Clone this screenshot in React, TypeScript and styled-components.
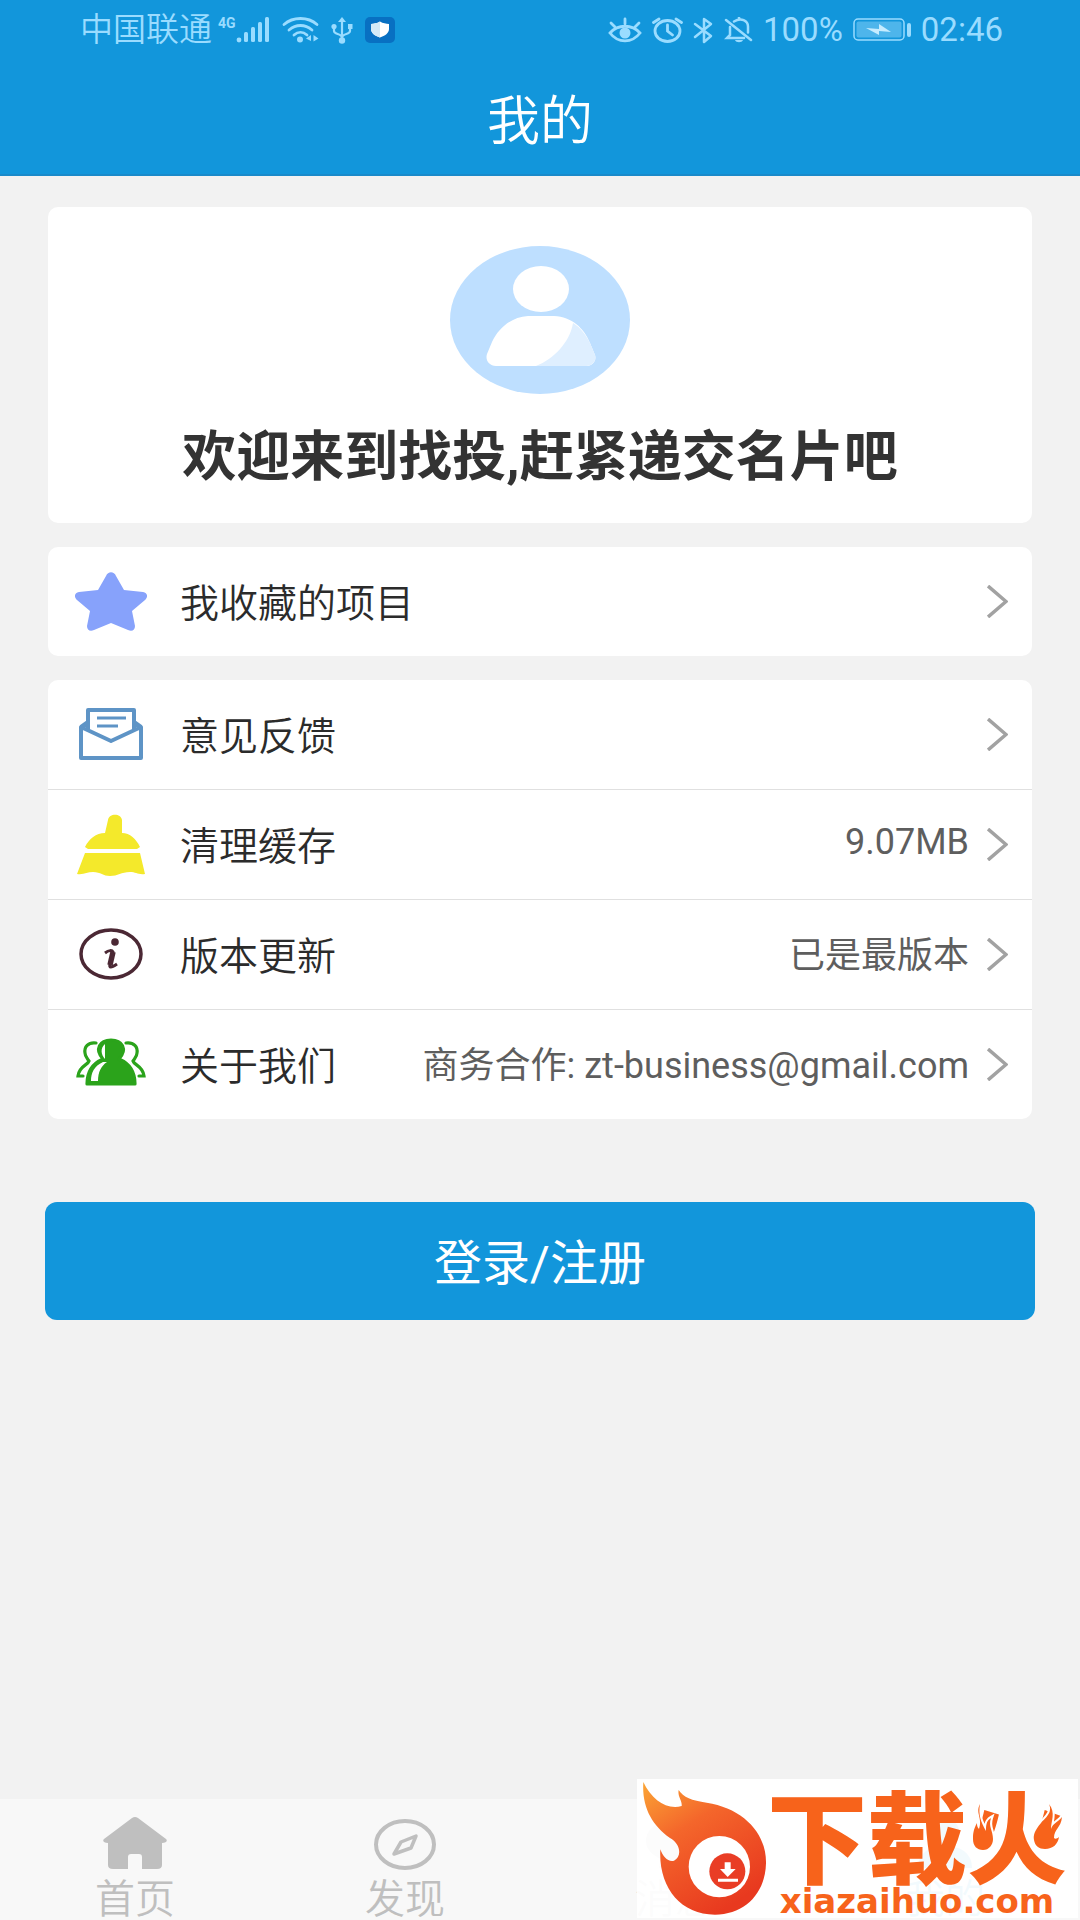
import React from "react";
import styled, { createGlobalStyle } from "styled-components";

const BLUE = "#1296db";
const STATUS = "#9adcff";
const ORANGE = "#f7631b";

const GlobalStyle = createGlobalStyle`
  *, *::before, *::after { box-sizing: border-box; }
  body {
    margin: 0;
    background: #f2f2f2;
    font-family: Roboto, "Noto Sans CJK SC", sans-serif;
  }
  button { font: inherit; border: 0; padding: 0; background: none; cursor: pointer; }
  a { color: inherit; text-decoration: none; }
  h1, h2, p, ul { margin: 0; padding: 0; font-weight: inherit; }
  ul { list-style: none; }
  svg { display: block; flex: none; }
`;

const Screen = styled.div`
  min-height: 100vh;
  display: flex;
  flex-direction: column;
`;

const TopBar = styled.header`
  background: ${BLUE};
  border-bottom: 2px solid #1a8aca;
`;

const StatusBar = styled.div`
  display: flex;
  align-items: center;
  justify-content: space-between;
  height: 60px;
  padding: 0 77px 0 80px;
  color: ${STATUS};
  font-size: 33px;
  line-height: 40px;
`;

const StatusGroup = styled.div<{ $gap: number }>`
  display: flex;
  align-items: center;
  gap: ${(p) => p.$gap}px;
`;

const Signal = styled.div`
  display: flex;
  align-items: center;
`;

const Carrier = styled.span`
  margin-right: 6px;
  font-weight: 350;
`;

const Network = styled.span`
  align-self: flex-start;
  padding-top: 6px;
  font-size: 14px;
  font-weight: 700;
  line-height: 14px;
`;

const Title = styled.h1`
  display: flex;
  align-items: center;
  justify-content: center;
  height: 114px;
  color: #fff;
  font-size: 53px;
  font-weight: 350;
`;

const Content = styled.main`
  flex: 1;
  padding: 31px 45px 40px;
`;

const Cards = styled.div`
  display: flex;
  flex-direction: column;
  gap: 24px;
  padding: 0 3px;
`;

const Card = styled.section`
  overflow: hidden;
  border-radius: 10px;
  background: #fff;
`;

const Welcome = styled(Card)`
  display: flex;
  flex-direction: column;
  align-items: center;
  gap: 30px;
  padding: 39px 20px 31px;
`;

const Greeting = styled.h2`
  color: #333;
  font-size: 54px;
  font-weight: 700;
  line-height: 68px;
`;

const Item = styled.li`
  & + & { border-top: 1px solid #e0e0e0; }
`;

const Row = styled.button`
  display: flex;
  align-items: center;
  width: 100%;
  height: 109px;
  padding: 0 24px 0 27px;
  text-align: left;
`;

const Label = styled.span`
  flex: 1;
  margin-left: 33px;
  padding-bottom: 3px;
  color: #2b2b2b;
  font-size: 39px;
  font-weight: 350;
  white-space: nowrap;
`;

const Value = styled.span`
  margin-right: 18px;
  padding-bottom: 5px;
  color: #5e5e5e;
  font-size: 36px;
  white-space: nowrap;
`;

const Login = styled.button`
  display: block;
  width: 100%;
  height: 118px;
  margin-top: 83px;
  padding-bottom: 4px;
  border-radius: 12px;
  background: ${BLUE};
  color: #fff;
  font-size: 48px;
`;

const TabBar = styled.nav`
  position: relative;
  display: grid;
  grid-template-columns: repeat(4, 1fr);
  background: #f8f8f8;
`;

const Tab = styled.a<{ $active?: boolean }>`
  display: flex;
  flex-direction: column;
  align-items: center;
  gap: 10px;
  height: 121px;
  padding-top: 17px;
  color: ${(p) => (p.$active ? BLUE : "#bfbfbf")};
  font-size: 40px;
  font-weight: 350;
  line-height: 40px;
`;

const Watermark = styled.div`
  position: absolute;
  right: 2px;
  bottom: 2px;
  display: flex;
  width: 441px;
  height: 139px;
  background: rgba(255, 255, 255, 0.95);
  color: ${ORANGE};
  white-space: nowrap;
`;

const Brand = styled.div`
  display: flex;
  flex-direction: column;
  align-items: center;
  padding-top: 14px;
`;

const BrandName = styled.div`
  position: relative;
  font-size: 100px;
  font-weight: 900;
  line-height: 98px;
`;

const Sparks = styled.svg`
  position: absolute;
  top: 10px;
  right: 2px;
`;

const BrandSite = styled.div`
  font-family: "DejaVu Sans", sans-serif;
  font-size: 34px;
  font-weight: 700;
  line-height: 20px;
`;

const SignalIcon = () => (
  <svg width="34" height="26" viewBox="0 0 34 26" fill="currentColor">
    <circle cx="3" cy="23" r="2.4" />
    <rect x="8" y="15" width="4" height="10" rx="1.5" />
    <rect x="15" y="10" width="4" height="15" rx="1.5" />
    <rect x="22" y="5" width="4" height="20" rx="1.5" />
    <rect x="29" y="0" width="4" height="25" rx="1.5" />
  </svg>
);

const WifiIcon = () => (
  <svg width="37" height="26" viewBox="0 0 37 26" fill="none" stroke="currentColor" strokeWidth="2.8" strokeLinecap="round">
    <path d="M2 7.500C11-.5 26-.5 35 7.500M7 13c7-6 16-6 23 0M12 18c4-3.500 9-3.500 13 0" />
    <circle cx="18" cy="22.500" r="3" fill="currentColor" stroke="none" />
    <path d="M29 18v6l-5-2.500zM31.500 18v6.500l5-3z" fill="currentColor" stroke="none" />
  </svg>
);

const UsbIcon = () => (
  <svg width="22" height="27" viewBox="0 0 22 27" fill="none" stroke="currentColor" strokeWidth="2.200">
    <path d="M11 4v20M3 10v4c0 4 8 2 8 7M19 9v5c0 4-8 2-8 7" />
    <path d="M7 5l4-5 4 5z" fill="currentColor" stroke="none" />
    <circle cx="3" cy="9.500" r="2.600" fill="currentColor" stroke="none" />
    <rect x="17" y="7" width="4.500" height="5" fill="currentColor" stroke="none" />
    <circle cx="11" cy="23.500" r="3.200" fill="currentColor" stroke="none" />
  </svg>
);

const ShieldIcon = () => (
  <svg width="30" height="26" viewBox="0 0 30 26">
    <rect width="30" height="26" rx="5" fill="#0870c2" />
    <path d="M15 4.500c3 2 6 2 9 2.500v5c0 4-4 7-9 8.500-5-1.500-9-4.500-9-8.500V7c3-.5 6-.5 9-2.500z" fill="#fff" />
    <path d="M15 4.500v16c-5-1.500-9-4.500-9-8.500V7c3-.5 6-.5 9-2.500z" fill="#d5eaf7" />
  </svg>
);

const EyeIcon = () => (
  <svg width="34" height="26" viewBox="0 0 34 26" fill="none" stroke="currentColor" strokeWidth="2.800" strokeLinecap="round">
    <path d="M2 16c8-9 22-9 30 0-8 10.500-22 10.500-30 0zM17 2v5M3 6l4 4M31 6l-4 4" />
    <circle cx="17" cy="16" r="5.500" fill="currentColor" stroke="none" />
  </svg>
);

const AlarmIcon = () => (
  <svg width="31" height="26" viewBox="0 0 31 26" fill="none" stroke="currentColor" strokeWidth="2.800" strokeLinecap="round">
    <ellipse cx="15.500" cy="14" rx="12.500" ry="10.500" />
    <path d="M15.500 8v6l5 4M1.500 5.500L7 2M29.500 5.500L24 2" />
  </svg>
);

const BluetoothIcon = () => (
  <svg width="21" height="27" viewBox="0 0 21 27" fill="none" stroke="currentColor" strokeWidth="2.500" strokeLinejoin="round" strokeLinecap="round">
    <path d="M2 7l16 12-7 6V2l7 5L2 20" />
  </svg>
);

const BellOffIcon = () => (
  <svg width="29" height="26" viewBox="0 0 29 26" fill="none" stroke="currentColor" strokeWidth="2.500" strokeLinecap="round">
    <path d="M2 3l25 20M6 10v8l-3 3h17M10 4.500c7-4.500 14-1 14 5v6M15 0v2" />
    <path d="M11 23h8c-1 3-7 3-8 0z" fill="currentColor" stroke="none" />
  </svg>
);

const BatteryIcon = () => (
  <svg width="58" height="24" viewBox="0 0 58 24">
    <rect x="1" y="1" width="50" height="21" rx="4" fill="none" stroke="currentColor" strokeWidth="1.500" />
    <rect x="3.500" y="3.500" width="45" height="16" rx="2" fill="currentColor" opacity=".45" />
    <path d="M13 10l13 1V6l12 8-12-1v4z" fill="#c6ecff" />
    <rect x="54" y="5" width="4" height="14" rx="2" fill="currentColor" />
  </svg>
);

const Avatar = () => (
  <svg width="180" height="148" viewBox="0 0 180 148" role="img" aria-label="头像">
    <ellipse cx="90" cy="74" rx="90" ry="74" fill="#bedfff" />
    <ellipse cx="91" cy="43" rx="28" ry="23" fill="#fff" />
    <path d="M78 70h26c18 1 30 12 36 27l5 12c2 6-3 11-9 11H46c-7 0-11-6-9-12l5-12c7-15 20-25 36-26z" fill="#fff" />
    <path d="M123 77c8 5 13 12 17 20l5 12c2 6-3 11-9 11H86c18-7 34-24 37-43z" fill="#dfefff" />
  </svg>
);

const StarIcon = () => (
  <svg width="72" height="60" viewBox="0 0 72 60">
    <path d="M31 4c2-5 8-5 10 0l8 14 19 2c5 1 5 5 2 8L57 39l3 15c0 4-3 6-7 4l-17-7-17 7c-4 2-7 0-7-4l3-15L2 28c-3-3-3-7 2-8l19-2z" fill="#87a2fb" />
  </svg>
);

const MailIcon = () => (
  <svg width="72" height="56" viewBox="0 0 72 56" fill="none" stroke="#5e94c6" strokeWidth="4" strokeLinejoin="round">
    <path d="M13 17l-7 3v31h60V20l-7-3M6 20l30 14 30-14M13 23V3h46v20M6 20l7-5M66 20l-7-5" />
    <path d="M22 11h29M22 19h21" strokeWidth="3" />
  </svg>
);

const BroomIcon = () => (
  <svg width="72" height="62" viewBox="0 0 72 62" fill="#f4e92b">
    <path d="M33 6c1-7 13-7 14 0v13c8 0 14 6 18 14l-3 2H13l-3-2c4-8 11-14 20-14z" />
    <path d="M10 39h55l5 21c-7 1-9-2-15-2-9 0-12 4-20 4-7 0-9-4-17-4-6 0-9 3-16 2z" />
  </svg>
);

const InfoIcon = () => (
  <svg width="72" height="56" viewBox="0 0 72 56" fill="none" stroke="#4b2834">
    <ellipse cx="36" cy="27" rx="30" ry="24" strokeWidth="3.500" />
    <circle cx="40" cy="15" r="3.800" fill="#4b2834" stroke="none" />
    <path d="M30 26c4-3 7-3 8-1l-3 12c-1 4 1 4 7 0" strokeWidth="3" />
    <path d="M38 25l-3 13" strokeWidth="5.500" />
  </svg>
);

const PeopleIcon = () => (
  <svg width="72" height="54" viewBox="0 0 72 54" fill="none" stroke="#2ba31b" strokeWidth="3.200" strokeLinecap="round">
    <path d="M21 5c-8-1-12 4-11 10 0 4 3 6 4 8-1 4-10 5-11 15h5M51 5c8-1 12 4 11 10 0 4-3 6-4 8 1 4 10 5 11 15h-5" />
    <path d="M28 21C19 11 25 2 36 2s17 9 8 19c7 3 16 10 16 25H12c0-15 9-22 16-25z" fill="#2ba31b" strokeLinejoin="round" />
    <path d="M30 6c-5 4-4 11 0 15M28 24c-9 4-12 11-12 19h7c0-9 3-15 9-19z" fill="#fff" stroke="none" />
  </svg>
);

const Chevron = () => (
  <svg width="21" height="33" viewBox="0 0 21 33" fill="none" stroke="#a2a2a2" strokeWidth="3.500">
    <path d="M1 1l18 15.500L1 32" />
  </svg>
);

const HomeIcon = () => (
  <svg width="64" height="54" viewBox="0 0 64 54" fill="currentColor">
    <path d="M29 2q3-2 6 0l28 21c2 2 0 4-4 4v22q0 4-5 4H39V41q0-3-3-3h-8q-3 0-3 3v12H10q-5 0-5-4V27c-4 0-6-2-4-4z" />
  </svg>
);

const CompassIcon = () => (
  <svg width="62" height="54" viewBox="0 0 62 54" fill="none" stroke="currentColor">
    <ellipse cx="31" cy="28.500" rx="29" ry="23.500" strokeWidth="4" />
    <path d="M42 20l-5 12-17 6 7-12z" strokeWidth="3.500" strokeLinejoin="round" />
  </svg>
);

const ChatIcon = () => (
  <svg width="62" height="54" viewBox="0 0 62 54" fill="currentColor">
    <path d="M31 4c17 0 29 9 29 21S48 46 31 46l-16 6 2-9C8 39 2 33 2 25 2 13 14 4 31 4z" />
  </svg>
);

const PersonIcon = () => (
  <svg width="62" height="54" viewBox="0 0 62 54" fill="currentColor">
    <ellipse cx="31" cy="15" rx="14" ry="12" />
    <path d="M4 52c0-14 10-22 27-22s27 8 27 22z" />
  </svg>
);

const FlameEmblem = () => (
  <svg width="130" height="139" viewBox="51 27 390 417">
    <defs>
      <linearGradient id="flame" x1="0" y1="0" x2="0.600" y2="1">
        <stop offset="0" stopColor="#fba535" />
        <stop offset=".4" stopColor="#f4662b" />
        <stop offset="1" stopColor="#e8391f" />
      </linearGradient>
    </defs>
    <path
      d="M70 36C95 90 140 120 185 108C187 90 172 80 176 60C190 82 215 92 260 98C370 115 440 190 438 280C436 370 375 434 285 434C180 434 115 350 121 238C128 260 145 277 162 272C188 258 180 220 150 204C95 165 65 110 70 36Z"
      fill="url(#flame)"
    />
    <circle cx="298" cy="290" r="92" fill="#fff" />
    <circle cx="322" cy="304" r="54" fill="#e93d25" />
    <path d="M314 277h18v20h15l-24 24-23-24h14zM294 326h60v9h-60z" fill="#fff" />
  </svg>
);

const FlameSparks = () => (
  <Sparks width="94" height="50" viewBox="0 0 94 50" fill={ORANGE} stroke="#fff" strokeWidth="4" paintOrder="stroke">
    <path d="M9 1C4 10 12 15 8 26 6 24 6 22 6 20 2 27 2 32 2 36c0 7 4 11 10 11s10-5 10-11c0-9-5-12-2-21-5 3-5 8-5 13-5-9-8-16-6-27z" />
    <path d="M78 1c4 9-4 14-8 19-6 7-8 12-7 17 1 6 5 9 11 9 8 0 13-5 14-12-2 2-4 2-5 1 0-9 7-10 8-21-4 5-9 6-11 12 0-8 5-16-2-25z" />
  </Sparks>
);

type Entry = { icon: React.ReactNode; label: string; value?: string };

const favourites: Entry[] = [{ icon: <StarIcon />, label: "我收藏的项目" }];

const settings: Entry[] = [
  { icon: <MailIcon />, label: "意见反馈" },
  { icon: <BroomIcon />, label: "清理缓存", value: "9.07MB" },
  { icon: <InfoIcon />, label: "版本更新", value: "已是最版本" },
  { icon: <PeopleIcon />, label: "关于我们", value: "商务合作: zt-business@gmail.com" },
];

const Menu = ({ entries }: { entries: Entry[] }) => (
  <Card>
    <ul>
      {entries.map((entry) => (
        <Item key={entry.label}>
          <Row type="button">
            {entry.icon}
            <Label>{entry.label}</Label>
            {entry.value && <Value>{entry.value}</Value>}
            <Chevron />
          </Row>
        </Item>
      ))}
    </ul>
  </Card>
);

export default function App() {
  return (
    <Screen lang="zh-CN">
      <GlobalStyle />
      <TopBar>
        <StatusBar>
          <StatusGroup $gap={12}>
            <Signal>
              <Carrier>中国联通</Carrier>
              <Network>4G</Network>
              <SignalIcon />
            </Signal>
            <WifiIcon />
            <UsbIcon />
            <ShieldIcon />
          </StatusGroup>
          <StatusGroup $gap={10}>
            <EyeIcon />
            <AlarmIcon />
            <BluetoothIcon />
            <BellOffIcon />
            <span>100%</span>
            <BatteryIcon />
            <span>02:46</span>
          </StatusGroup>
        </StatusBar>
        <Title>我的</Title>
      </TopBar>
      <Content>
        <Cards>
          <Welcome>
            <Avatar />
            <Greeting>欢迎来到找投,赶紧递交名片吧</Greeting>
          </Welcome>
          <Menu entries={favourites} />
          <Menu entries={settings} />
        </Cards>
        <Login type="button">登录/注册</Login>
      </Content>
      <TabBar>
        <Tab href="#home">
          <HomeIcon />
          首页
        </Tab>
        <Tab href="#discover">
          <CompassIcon />
          发现
        </Tab>
        <Tab href="#messages">
          <ChatIcon />
          消息
        </Tab>
        <Tab href="#me" $active>
          <PersonIcon />
          我的
        </Tab>
        <Watermark>
          <FlameEmblem />
          <Brand>
            <BrandName>
              下载火
              <FlameSparks />
            </BrandName>
            <BrandSite>xiazaihuo.com</BrandSite>
          </Brand>
        </Watermark>
      </TabBar>
    </Screen>
  );
}
